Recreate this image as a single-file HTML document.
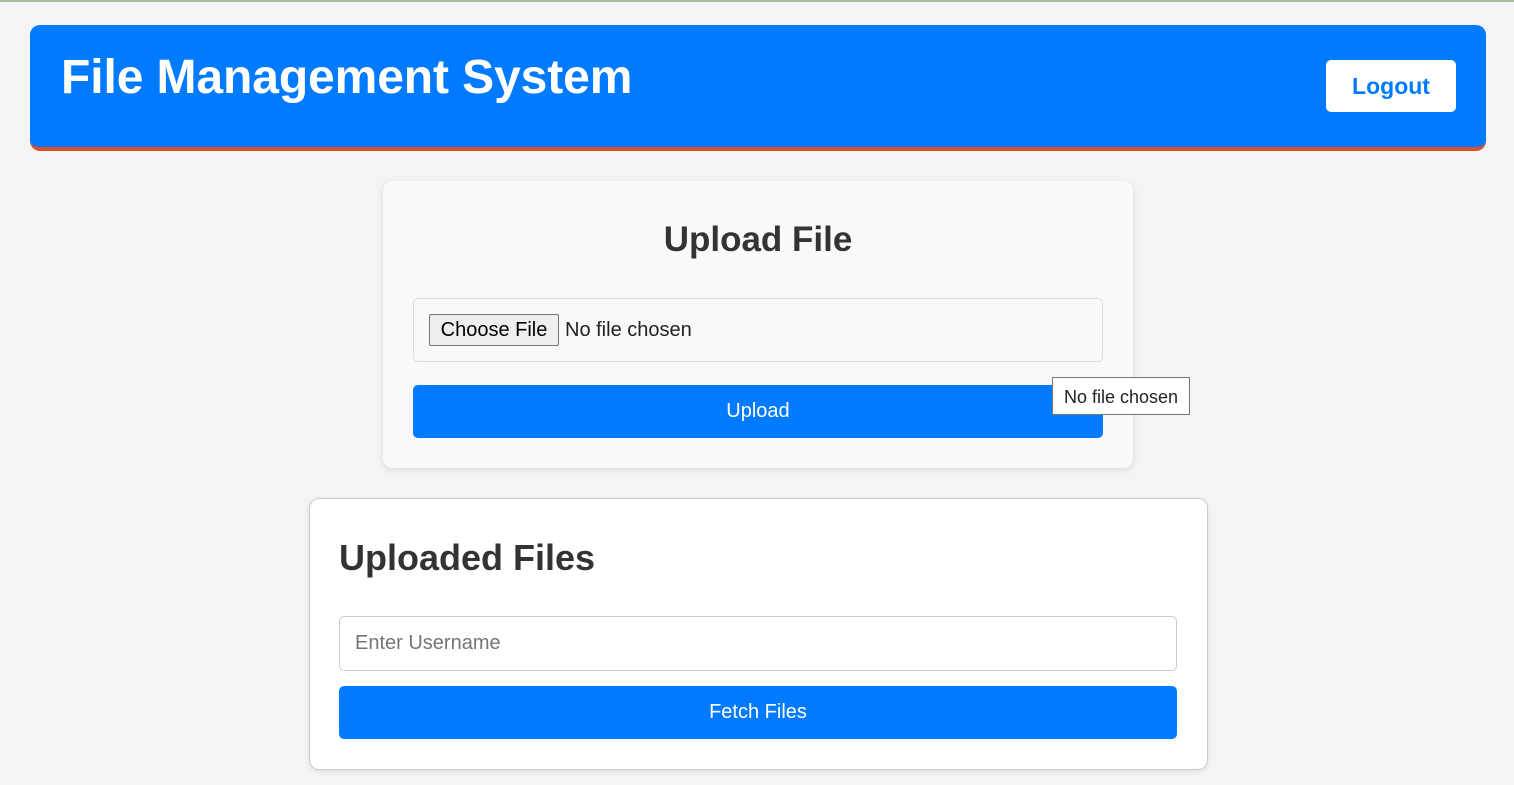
<!DOCTYPE html>
<html><head><style>
body{margin:0;width:1514px;height:785px;background:#f4f4f4;font-family:"Liberation Sans",Arial,sans-serif;position:relative;overflow:hidden}
div{box-sizing:border-box;position:absolute}
.topline{left:0;top:0;width:1514px;height:2px;background:#a6bf9e}
.hdr{left:30px;top:25px;width:1456px;height:126px;background:#007bff;border-radius:10px;border-bottom:4px solid #d9502a}
.hdr h1{position:absolute;left:31px;top:25px;margin:0;color:#fff;font-size:48px;font-weight:bold;line-height:56px;letter-spacing:-0.1px}
.logout{left:1296px;top:35px;width:130px;height:52px;background:#fff;border-radius:5px;color:#007bff;font-weight:bold;font-size:23px;text-align:center;line-height:52px}
.card1{left:383px;top:181px;width:750px;height:287px;background:#f9f9f9;border-radius:10px;box-shadow:0 2px 8px rgba(0,0,0,.1)}
.t1{left:0;width:750px;top:38px;text-align:center;font-size:35px;font-weight:bold;color:#333;line-height:42px}
.fbox{left:30px;top:117px;width:690px;height:64px;border:1px solid #ddd;border-radius:5px}
.cf{left:15px;top:15px;width:130px;height:32px;background:#efefef;border:1px solid #767676;border-radius:2px;font-size:20px;line-height:30px;text-align:center;color:#000}
.nf{left:151px;top:15px;font-size:20px;line-height:32px;color:#222}
.btn{background:#007bff;border-radius:5px;color:#fff;font-size:20px;text-align:center;line-height:53px;height:53px}
.tip{left:1052px;top:377px;width:138px;height:38px;background:#fff;border:1px solid #767676;font-size:18px;line-height:38px;text-align:center;color:#222}
.card2{left:309px;top:498px;width:899px;height:272px;background:#fff;border:1px solid #ccc;border-radius:10px;box-shadow:0 2px 6px rgba(0,0,0,.08)}
.t2{left:29px;top:38px;font-size:36px;font-weight:bold;color:#333;line-height:42px}
.inp{left:29px;top:117px;width:838px;height:55px;border:1px solid #ccc;border-radius:5px;font-size:20px;color:#757575;line-height:53px;padding-left:15px}
</style></head><body>
<div class="topline"></div>
<div class="hdr"><h1>File Management System</h1><div class="logout">Logout</div></div>
<div class="card1">
<div class="t1">Upload File</div>
<div class="fbox"><div class="cf">Choose File</div><div class="nf">No file chosen</div></div>
<div class="btn" style="left:30px;top:204px;width:690px">Upload</div>
</div>
<div class="tip">No file chosen</div>
<div class="card2">
<div class="t2">Uploaded Files</div>
<div class="inp">Enter Username</div>
<div class="btn" style="left:29px;top:187px;width:838px">Fetch Files</div>
</div>
</body></html>
